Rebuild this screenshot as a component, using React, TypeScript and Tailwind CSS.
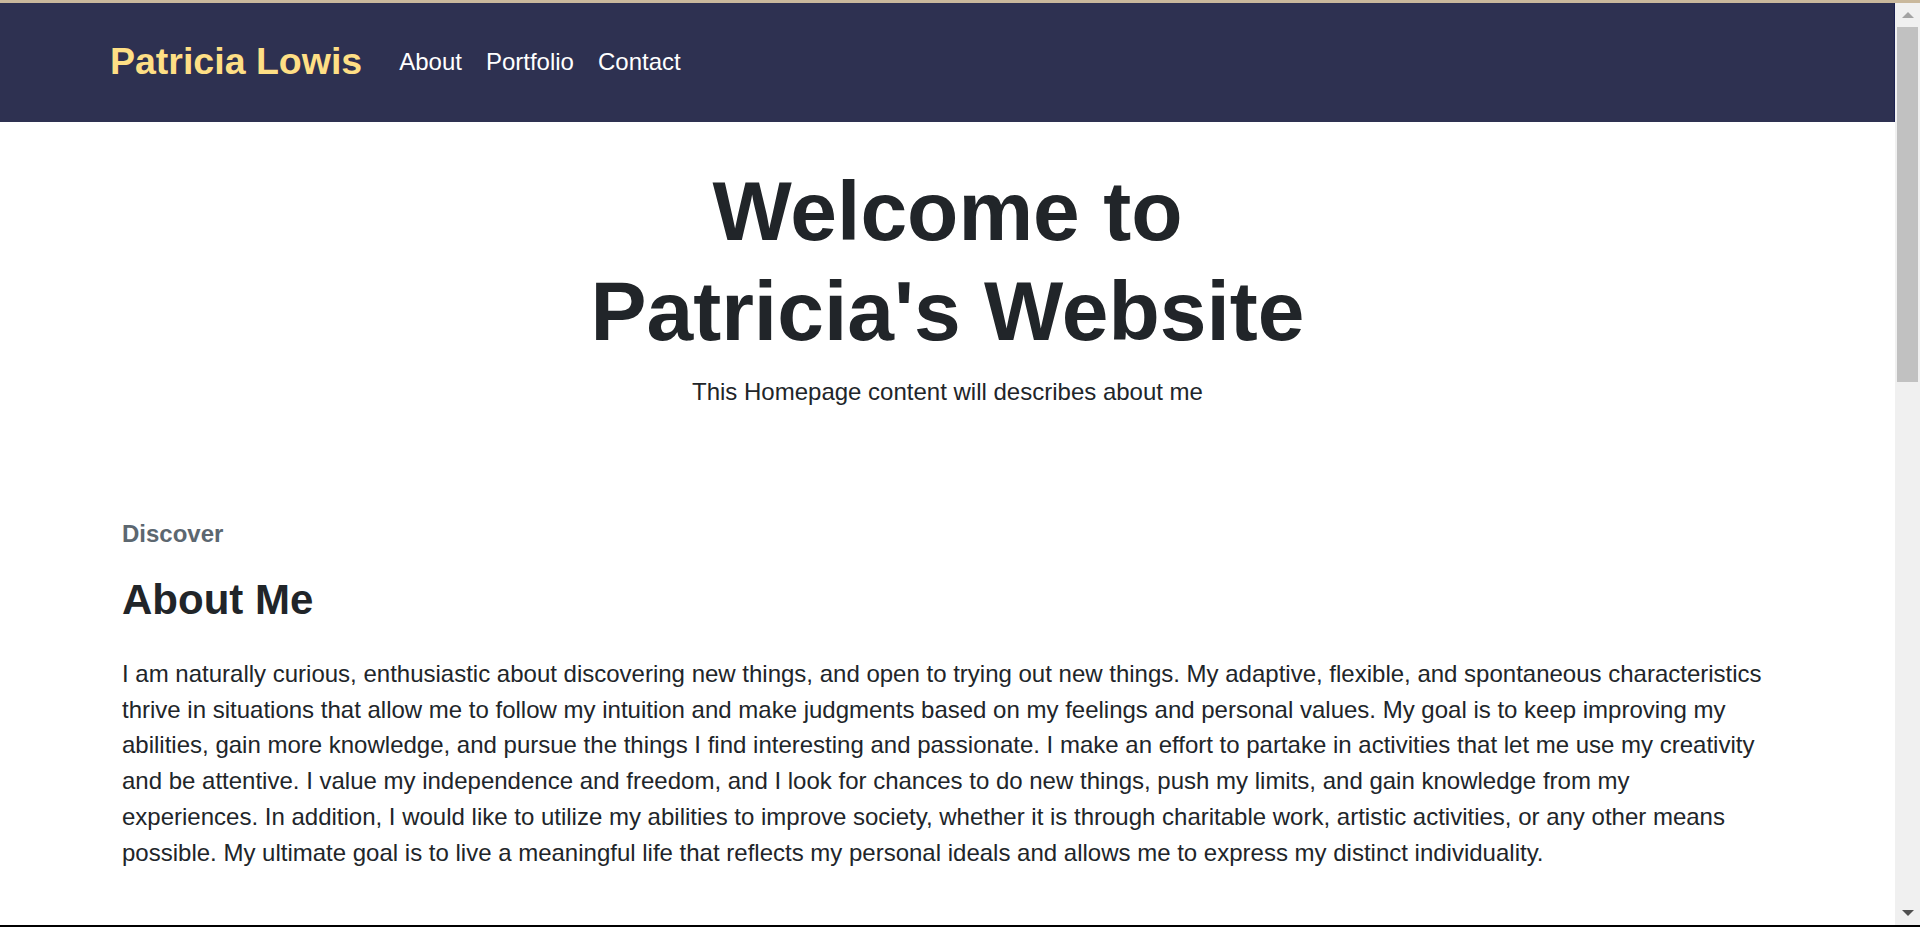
import React from 'react';

const links = ['About', 'Portfolio', 'Contact'];

export default function App() {
  return (
    <div
      className="flex h-[927px] w-full flex-col overflow-hidden bg-white"
      style={{ fontFamily: '"Liberation Sans", Arial, sans-serif' }}
    >
      <div className="h-[3px] bg-[#c9b89c]" />
      <div className="flex min-h-0 flex-1">
        <div className="flex min-w-0 flex-1 flex-col">
          {/* navbar */}
          <nav className="flex h-[119px] items-center border-r border-[#1c2150] bg-[#2e3151] pb-[2px] pl-[110px]">
            <a className="text-[37.5px] font-bold text-[#fedf85]">Patricia Lowis</a>
            <ul className="ml-[37px] flex gap-[24px]">
              {links.map((l) => (
                <li key={l} className="text-[24px] text-white">
                  {l}
                </li>
              ))}
            </ul>
          </nav>

          {/* hero */}
          <header className="flex flex-col items-center pt-[39px] text-center text-[#212529]">
            <h1 className="text-[84px] leading-[100px] font-bold">
              Welcome to
              <br />
              Patricia's Website
            </h1>
            <p className="mt-[13px] text-[24px] leading-[36px]">This Homepage content will describes about me</p>
          </header>

          {/* about */}
          <section className="px-[122px] pt-[106px]">
            <div className="text-[24px] leading-[36px] font-bold text-[#5c6770]">Discover</div>
            <h2 className="mt-[23px] text-[42px] leading-[50px] font-bold text-[#212529]">About Me</h2>
            <p className="mt-[31px] max-w-[1645px] text-[24px] leading-[35.7px] text-[#212529]">
              I am naturally curious, enthusiastic about discovering new things, and open to trying out new things. My
              adaptive, flexible, and spontaneous characteristics thrive in situations that allow me to follow my
              intuition and make judgments based on my feelings and personal values. My goal is to keep improving my
              abilities, gain more knowledge, and pursue the things I find interesting and passionate. I make an effort
              to partake in activities that let me use my creativity and be attentive. I value my independence and
              freedom, and I look for chances to do new things, push my limits, and gain knowledge from my experiences.
              In addition, I would like to utilize my abilities to improve society, whether it is through charitable
              work, artistic activities, or any other means possible. My ultimate goal is to live a meaningful life that
              reflects my personal ideals and allows me to express my distinct individuality.
            </p>
          </section>
        </div>

        {/* scrollbar */}
        <div className="flex w-[25px] flex-col items-center bg-[#f0f0f0]">
          <div className="flex h-[24px] items-center justify-center">
            <div className="h-0 w-0 border-x-[6px] border-b-[6px] border-x-transparent border-b-[#a3a3a3]" />
          </div>
          <div className="h-[355px] w-[21px] bg-[#c1c1c1]" />
          <div className="flex-1" />
          <div className="flex h-[24px] items-center justify-center">
            <div className="h-0 w-0 border-x-[6px] border-t-[6px] border-x-transparent border-t-[#505050]" />
          </div>
        </div>
      </div>
      <div className="h-[2px] bg-black" />
    </div>
  );
}
